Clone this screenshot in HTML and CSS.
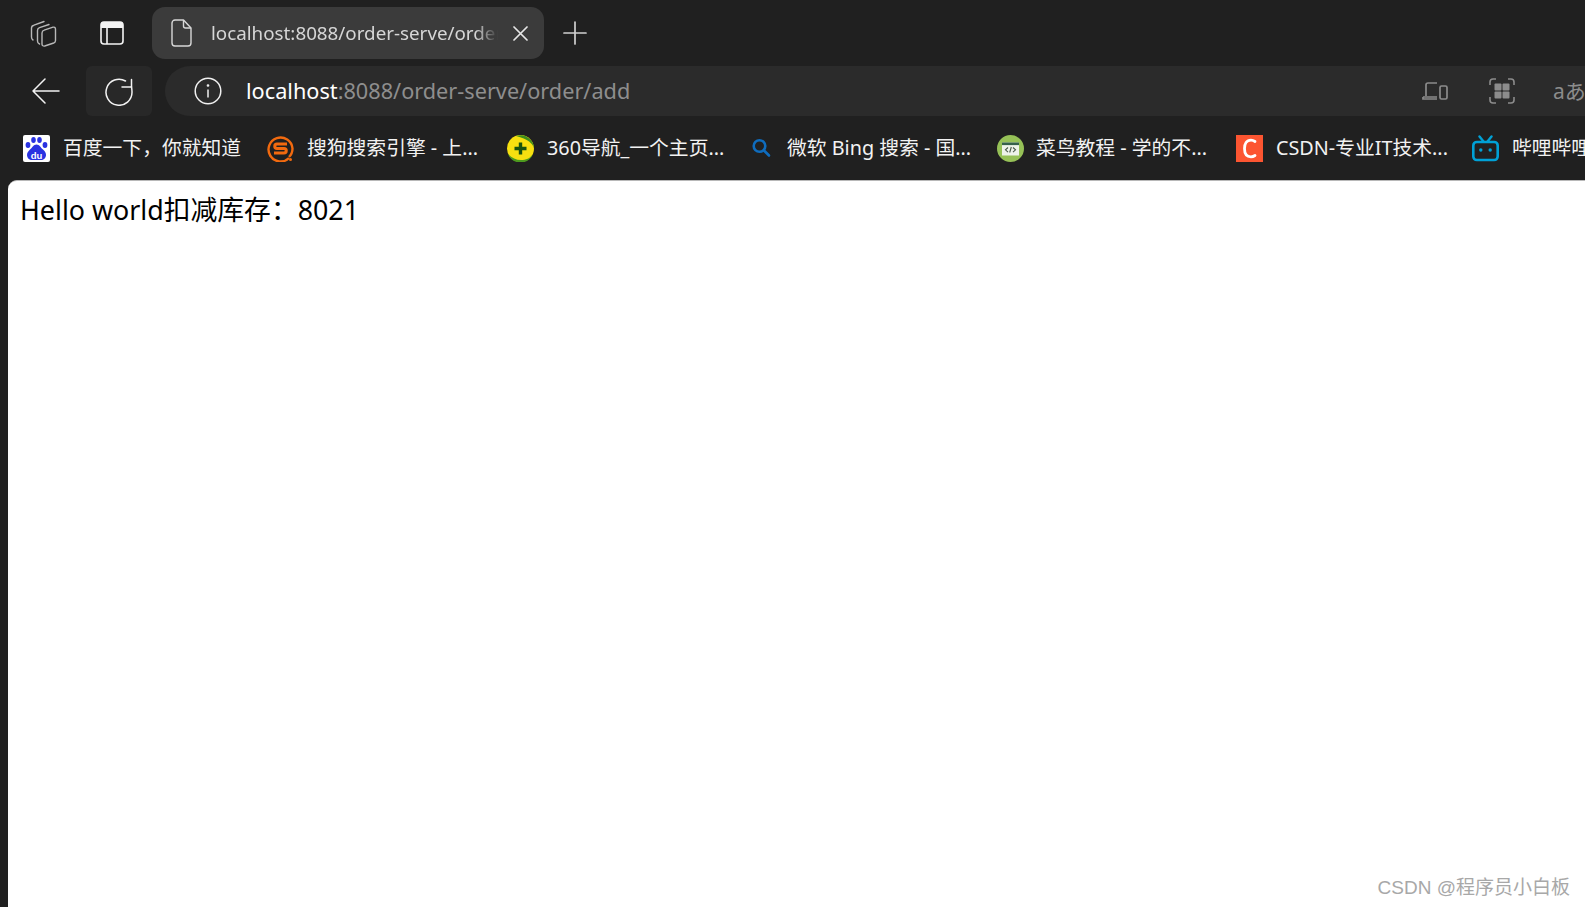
FILE: index.html
```html
<!DOCTYPE html>
<html lang="zh-CN">
<head>
<meta charset="utf-8">
<title>localhost:8088/order-serve/order/add</title>
<link rel="stylesheet" href="styles.css">
</head>
<body>
<div class="browser">
  <div class="tabstrip">
    <div class="slot slot-workspaces">
      <svg class="ic" width="27" height="27" viewBox="0 0 27 27" fill="none" stroke="#b8b8b8" stroke-width="1.400" stroke-linejoin="round" stroke-linecap="round">
        <path d="M14 1.500 4 5.200A3 3 0 0 0 1.500 8v9c0 1.500.5 2.500 1.500 3"/>
        <path d="M19 4.500 9.500 7.700a3 3 0 0 0-2 2.800V21c0 1.500.5 2.500 2 3"/>
        <path d="M14.200 10.200 23 7.200c1.200-.4 2.500.4 2.500 1.800v11.500c0 1.200-.7 2.100-1.800 2.500l-9 3c-1.300.4-2.700-.4-2.700-1.800V13a3 3 0 0 1 2.200-2.800z"/>
      </svg>
    </div>
    <div class="slot slot-vtabs">
      <svg class="ic" width="24" height="24" viewBox="0 0 24 24" fill="none">
        <rect x="1" y="1" width="22" height="22" rx="3" stroke="#f4f4f4" stroke-width="1.600"/>
        <path d="M1 4a3 3 0 0 1 3-3h16a3 3 0 0 1 3 3v3H1z" fill="#f4f4f4"/>
        <path d="M7 7v16" stroke="#f4f4f4" stroke-width="1.600"/>
      </svg>
    </div>
    <div class="tab">
      <svg class="ic tab-doc" width="21" height="28" viewBox="0 0 21 28" fill="none" stroke="#d8d8d8" stroke-width="1.400" stroke-linejoin="round">
        <path d="M4 1h8.500L20 9v15a3 3 0 0 1-3 3H4a3 3 0 0 1-3-3V4a3 3 0 0 1 3-3z"/>
        <path d="M12.500 1v6a2 2 0 0 0 2 2H20"/>
      </svg>
      <span class="tab-title">localhost:8088/order-serve/order/add</span>
      <svg class="ic tab-close" width="15" height="15" viewBox="0 0 15 15" stroke="#e6e6e6" stroke-width="1.700" stroke-linecap="round">
        <path d="M1 1l13 13M14 1 1 14"/>
      </svg>
    </div>
    <div class="slot slot-new">
      <svg class="ic" width="24" height="24" viewBox="0 0 24 24" stroke="#d0d0d0" stroke-width="1.700" stroke-linecap="round">
        <path d="M12 1v22M1 12h22"/>
      </svg>
    </div>
  </div>

  <div class="toolbar">
    <div class="slot slot-back">
      <svg class="ic" width="28" height="26" viewBox="0 0 28 26" fill="none" stroke="#f2f2f2" stroke-width="1.500" stroke-linecap="round" stroke-linejoin="round">
        <path d="M13 1 1 13l12 12M1 13h26"/>
      </svg>
    </div>
    <div class="slot slot-refresh">
      <svg class="ic" width="28" height="30" viewBox="0 0 28 30" fill="none" stroke="#f2f2f2" stroke-width="1.500" stroke-linecap="round" stroke-linejoin="round">
        <path d="M20.500 5A13 13 0 1 0 27 16c0-1.800-.2-3.400-.5-5"/>
        <path d="M26.500 3.500V11H17"/>
      </svg>
    </div>
    <div class="address">
      <svg class="ic addr-info" width="28" height="28" viewBox="0 0 28 28" fill="none" stroke="#f0f0f0" stroke-width="1.500">
        <circle cx="14" cy="14" r="12.800"/>
        <path d="M14 12.500v8"/>
        <circle cx="14" cy="8.500" r=".6" fill="#f0f0f0"/>
      </svg>
      <span class="url"><span class="url-host">localhost</span>:8088/order-serve/order/add</span>
      <svg class="ic addr-device" width="26" height="20" viewBox="0 0 26 20" fill="none" stroke="#8c8c8c" stroke-width="1.700">
        <path d="M15 2H6a2 2 0 0 0-2 2v11M1 16h14"/>
        <path d="M1 16v2h14"/>
        <rect x="18" y="5" width="7" height="13" rx="1.500"/>
      </svg>
      <svg class="ic addr-grid" width="26" height="26" viewBox="0 0 26 26" fill="none">
        <path d="M7 1H4a3 3 0 0 0-3 3v3M19 1h3a3 3 0 0 1 3 3v3M7 25H4a3 3 0 0 1-3-3v-3M19 25h3a3 3 0 0 0 3-3v-3" stroke="#8c8c8c" stroke-width="1.600"/>
        <rect x="5.500" y="5.500" width="7" height="7" rx="1" fill="#8c8c8c"/>
        <rect x="13.500" y="5.500" width="7" height="7" rx="1" fill="#8c8c8c"/>
        <rect x="5.500" y="13.500" width="7" height="7" rx="1" fill="#8c8c8c"/>
        <rect x="13.500" y="13.500" width="7" height="7" rx="1" fill="#8c8c8c"/>
      </svg>
      <span class="addr-translate">aあ</span>
    </div>
  </div>

  <div class="bookmarks">
    <div class="bm bm-baidu">
      <svg class="ic" width="27" height="27" viewBox="0 0 27 27">
        <rect width="27" height="27" rx="2" fill="#fff"/>
        <g fill="#2932e1">
          <ellipse cx="5" cy="10" rx="2.400" ry="3"/>
          <ellipse cx="10.500" cy="5" rx="2.300" ry="3"/>
          <ellipse cx="16.500" cy="5" rx="2.300" ry="3"/>
          <ellipse cx="22" cy="10" rx="2.400" ry="3"/>
          <path d="M13.500 9.500c3 0 4 3 6.500 5 2.500 2 3 4 3 5.500 0 3-2.500 5-5 5h-9c-2.500 0-5-2-5-5 0-2 1-3.500 3-5.500 2.500-2 3.500-5 6.500-5z"/>
        </g>
        <text x="13.500" y="23.500" class="du">du</text>
      </svg>
      <span class="bm-label">百度一下，你就知道</span>
    </div>
    <div class="bm bm-sogou">
      <svg class="ic" width="27" height="27" viewBox="0 0 27 27" fill="none">
        <path d="M22 23A12 12 0 1 1 25.500 13.500c0 3-1 6-3.500 8.500" stroke="#f26a0f" stroke-width="2.400"/>
        <circle cx="23.500" cy="24.500" r="1.500" fill="#f26a0f"/>
        <path d="M20 9h-10c-3 0-3 4.500 0 4.500h7c3 0 3 4.500 0 4.500H7" stroke="#f26a0f" stroke-width="3"/>
      </svg>
      <span class="bm-label">搜狗搜索引擎 - 上...</span>
    </div>
    <div class="bm bm-360">
      <svg class="ic" width="27" height="27" viewBox="0 0 27 27">
        <circle cx="13.500" cy="13.500" r="13.500" fill="#f7e010"/>
        <path d="M9 1A13.500 13.500 0 0 1 27 13.500c-1-5-6-9.500-18-12.500z" fill="#3f8f1c"/>
        <path d="M1 19a13.500 13.500 0 0 0 25 0c-3 4.500-7 6-12 6s-9-2-13-6z" fill="#4c9a1e"/>
        <path d="M13.500 7.500v12M7.500 13.500h12" stroke="#17520f" stroke-width="3.400"/>
      </svg>
      <span class="bm-label">360导航_一个主页...</span>
    </div>
    <div class="bm bm-bing">
      <svg class="ic" width="27" height="27" viewBox="0 0 27 27" fill="none" stroke="#0f6cbd" stroke-width="2.600" stroke-linecap="round">
        <circle cx="11.500" cy="11" r="5.800"/>
        <path d="M16 15.500l5 5"/>
      </svg>
      <span class="bm-label">微软 Bing 搜索 - 国...</span>
    </div>
    <div class="bm bm-runoob">
      <svg class="ic" width="27" height="27" viewBox="0 0 27 27">
        <circle cx="13.500" cy="13.500" r="13.500" fill="#96c157"/>
        <rect x="5" y="7.500" width="17" height="13" fill="#eef3ea"/>
        <rect x="5" y="7.500" width="17" height="2.600" fill="#35604a"/>
        <path d="M11 12.500l-2.500 2.300 2.500 2.300M16 12.500l2.500 2.300-2.500 2.300M14.300 12l-1.600 5.500" fill="none" stroke="#4a5a4a" stroke-width="1.100"/>
      </svg>
      <span class="bm-label">菜鸟教程 - 学的不...</span>
    </div>
    <div class="bm bm-csdn">
      <svg class="ic" width="27" height="27" viewBox="0 0 27 27">
        <rect width="27" height="27" fill="#fc5531"/>
        <path d="M19 6.500c-1.500-1-3-1.300-4-1.300-4.500 0-6.500 3.600-6.500 8.300s2 8.300 6.500 8.300c1 0 2.500-.3 4-1.300" fill="none" stroke="#fff" stroke-width="2.800" stroke-linecap="round"/>
      </svg>
      <span class="bm-label">CSDN-专业IT技术...</span>
    </div>
    <div class="bm bm-bili">
      <svg class="ic" width="27" height="27" viewBox="0 0 27 27" fill="none">
        <rect x="1.300" y="7" width="24.400" height="18" rx="3.500" stroke="#00a1d6" stroke-width="2.600"/>
        <path d="M7.500 1.500l4 5M19.500 1.500l-4 5" stroke="#00a1d6" stroke-width="2.400" stroke-linecap="round"/>
        <circle cx="8.800" cy="15" r="1.700" fill="#00a1d6"/>
        <circle cx="18.200" cy="15" r="1.700" fill="#00a1d6"/>
      </svg>
      <span class="bm-label">哔哩哔哩</span>
    </div>
  </div>

  <main class="page">
    <p class="page-text">Hello world扣减库存：8021</p>
    <span class="watermark">CSDN @程序员小白板</span>
  </main>
</div>
</body>
</html>
```

FILE: styles.css
```css
* { box-sizing: border-box; }

html, body {
  margin: 0;
  height: 100%;
  overflow: hidden;
  background: #202020;
}

.browser {
  display: flex;
  flex-direction: column;
  height: 907px;
  font-family: "Noto Sans", "Noto Sans CJK SC", sans-serif;
  color: #f0f0f0;
}

.ic { display: block; flex: none; }

.slot {
  display: flex;
  align-items: center;
  justify-content: center;
  flex: none;
}

/* tab strip */
.tabstrip {
  display: flex;
  align-items: stretch;
  height: 52px;
  margin-top: 7px;
  flex: none;
}
.slot-workspaces { width: 86px; }
.slot-vtabs { width: 52px; margin-right: 14px; }
.slot-new { width: 62px; }

.tab {
  display: flex;
  align-items: center;
  width: 392px;
  padding-left: 19px;
  background: #3b3b3b;
  border-radius: 13px;
}
.tab-doc { margin-right: 19px; }
.tab-title {
  width: 287px;
  margin-right: 15px;
  overflow: hidden;
  white-space: nowrap;
  font-size: 18.800px;
  line-height: 30px;
  color: #d6d6d6;
  -webkit-mask-image: linear-gradient(to right, #000 92%, transparent 100%);
  mask-image: linear-gradient(to right, #000 92%, transparent 100%);
}

/* toolbar */
.toolbar {
  display: flex;
  align-items: stretch;
  height: 50px;
  margin-top: 7px;
  flex: none;
}
.slot-back { width: 86px; padding-left: 6px; }
.slot-refresh {
  width: 66px;
  background: #282828;
  border-radius: 6px;
}
.address {
  display: flex;
  align-items: center;
  flex: 1;
  min-width: 0;
  margin-left: 13px;
  padding-left: 29px;
  overflow: hidden;
  background: #2b2b2b;
  border-radius: 25px 0 0 25px;
}
.addr-info { margin-right: 24px; }
.url {
  flex: 1;
  white-space: nowrap;
  font-size: 21.700px;
  line-height: 30px;
  color: #8e8e8e;
}
.url-host { color: #fff; }
.addr-device { margin-right: 41px; }
.addr-grid { margin-right: 38px; }
.addr-translate {
  flex: none;
  width: 32px;
  white-space: nowrap;
  font-size: 21px;
  line-height: 28px;
  color: #8c8c8c;
}

/* bookmarks */
.bookmarks {
  display: flex;
  align-items: center;
  height: 64px;
  padding-left: 23px;
  overflow: hidden;
  flex: none;
}
.bm {
  display: flex;
  align-items: center;
  flex: none;
  gap: 13px;
}
.bm-baidu { width: 244px; }
.bm-sogou { width: 240px; }
.bm-360 { width: 241px; }
.bm-bing { width: 249px; }
.bm-runoob { width: 239px; }
.bm-csdn { width: 236px; }
.bm-bing .bm-label { margin-left: -1px; }
.bm-runoob .bm-label { margin-left: -1px; }
.bm-label {
  white-space: nowrap;
  font-size: 19.800px;
  line-height: 28px;
  color: #f2f2f2;
}
.du {
  font-family: "Liberation Sans", sans-serif;
  font-size: 9.500px;
  font-weight: 700;
  text-anchor: middle;
  fill: #fff;
}

/* page */
.page {
  position: relative;
  flex: 1;
  margin-left: 8px;
  background: #fff;
  border-top: 1px solid #b8b8b8;
  border-top-left-radius: 9px;
  color: #000;
}
.page-text {
  margin: 0;
  padding: 9px 0 0 12px;
  white-space: nowrap;
  font-size: 26.800px;
  line-height: 40px;
}
.watermark {
  position: absolute;
  right: 15px;
  bottom: 5px;
  white-space: nowrap;
  font-family: "Liberation Sans", "Noto Sans CJK SC", sans-serif;
  font-size: 19px;
  line-height: 28px;
  color: #a8a8a8;
}
```
